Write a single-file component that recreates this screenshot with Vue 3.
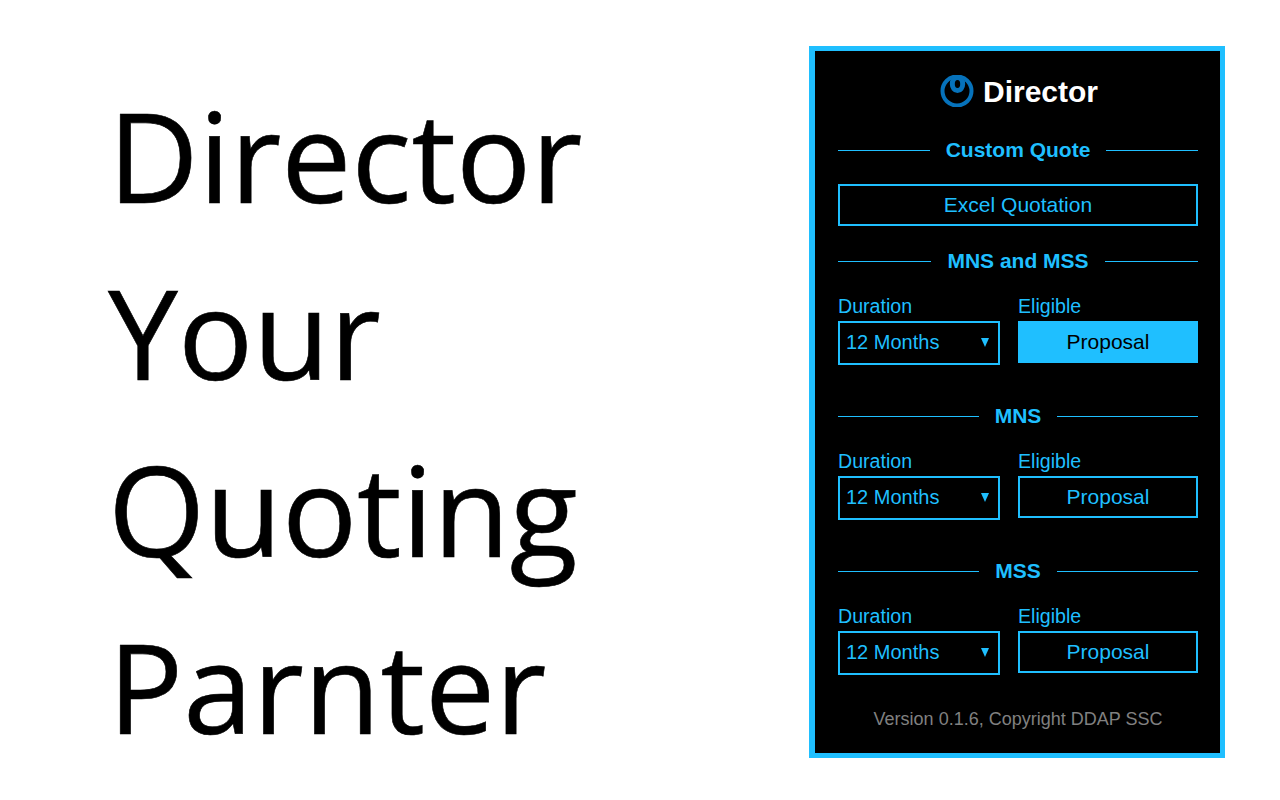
<script setup>
const sections = [
  { title: 'MNS and MSS', active: true },
  { title: 'MNS', active: false },
  { title: 'MSS', active: false },
]
const words = ['Director', 'Your', 'Quoting', 'Parnter']
</script>

<template>
  <div class="page">
    <div class="hero">
      <div v-for="w in words" :key="w" class="word">{{ w }}</div>
    </div>
    <div class="panel">
      <div class="brand">
        <svg class="logo" width="34" height="32" viewBox="0 0 34 32" fill="none">
          <circle cx="17" cy="16" r="14.5" stroke="#0672bb" stroke-width="4" />
          <ellipse cx="17.5" cy="9.5" rx="6" ry="7" fill="#000" stroke="#000" stroke-width="3" />
          <ellipse cx="17.5" cy="9" rx="5.2" ry="6.5" stroke="#0672bb" stroke-width="5" />
        </svg>
        <span class="brand-name">Director</span>
      </div>
      <div class="heading first"><span>Custom Quote</span></div>
      <button class="btn excel">Excel Quotation</button>
      <div v-for="s in sections" :key="s.title" class="section">
        <div class="heading"><span>{{ s.title }}</span></div>
        <div class="row">
          <div class="field">
            <div class="label">Duration</div>
            <div class="select">12 Months<i class="caret"></i></div>
          </div>
          <div class="field">
            <div class="label">Eligible</div>
            <button class="btn proposal" :class="{ on: s.active }">Proposal</button>
          </div>
        </div>
      </div>
      <div class="footer">Version 0.1.6, Copyright DDAP SSC</div>
    </div>
  </div>
</template>

<style>
html, body { margin: 0; background: #fff; }
</style>

<style scoped>
.page {
  width: 1280px;
  height: 800px;
  display: flex;
  overflow: hidden;
  font-family: "Liberation Sans", Arial, sans-serif;
  background: #fff;
}
.hero {
  width: 809px;
  padding: 66px 0 0 108px;
  box-sizing: border-box;
  font-family: "Open Sans", sans-serif;
  font-size: 125px;
  line-height: 177px;
  -webkit-text-stroke: 0.6px #000;
  color: #000;
}
.word { height: 177px; }
.panel {
  width: 416px;
  height: 712px;
  margin-top: 46px;
  box-sizing: border-box;
  border: 5px solid #1fbfff;
  border-left-width: 6px;
  background: #000;
  padding: 0 22px 0 23px;
  color: #1fbfff;
}
.brand {
  height: 82px;
  padding-left: 2px;
  display: flex;
  align-items: center;
  justify-content: center;
  gap: 9px;
}
.logo { margin-bottom: 3px; }
.brand-name { font-size: 30px; font-weight: 700; color: #fff; }
.heading {
  display: flex;
  align-items: center;
  gap: 16px;
  height: 24px;
  font-size: 21px;
  font-weight: 700;
}
.heading::before,
.heading::after {
  content: "";
  flex: 1;
  height: 1px;
  background: #1fbfff;
}
.heading.first { margin-top: 5px; }
.btn {
  display: block;
  box-sizing: border-box;
  height: 42px;
  border: 2px solid #1fbfff;
  background: #000;
  color: #1fbfff;
  font: 21px "Liberation Sans", Arial, sans-serif;
  padding: 0;
}
.excel { width: 360px; margin-top: 22px; }
.section { margin-top: 23px; }
.section + .section { margin-top: 39px; }
.row { display: flex; gap: 18px; margin-top: 21px; }
.field { width: 180px; }
.field:first-child { width: 162px; }
.label { font-size: 19.6px; height: 27px; line-height: 24px; }
.select {
  box-sizing: border-box;
  width: 162px;
  height: 44px;
  border: 2px solid #1fbfff;
  padding: 0 0 2px 6px;
  display: flex;
  align-items: center;
  justify-content: space-between;
  font-size: 20px;
}
.caret {
  width: 0;
  height: 0;
  margin-right: 9px;
  border-left: 4.5px solid transparent;
  border-right: 4.5px solid transparent;
  border-top: 9px solid #1fbfff;
}
.proposal { width: 180px; }
.proposal.on { background: #1fbfff; color: #000; }
.footer { margin-top: 33px; text-align: center; color: #808080; font-size: 18px; line-height: 22px; }
</style>
